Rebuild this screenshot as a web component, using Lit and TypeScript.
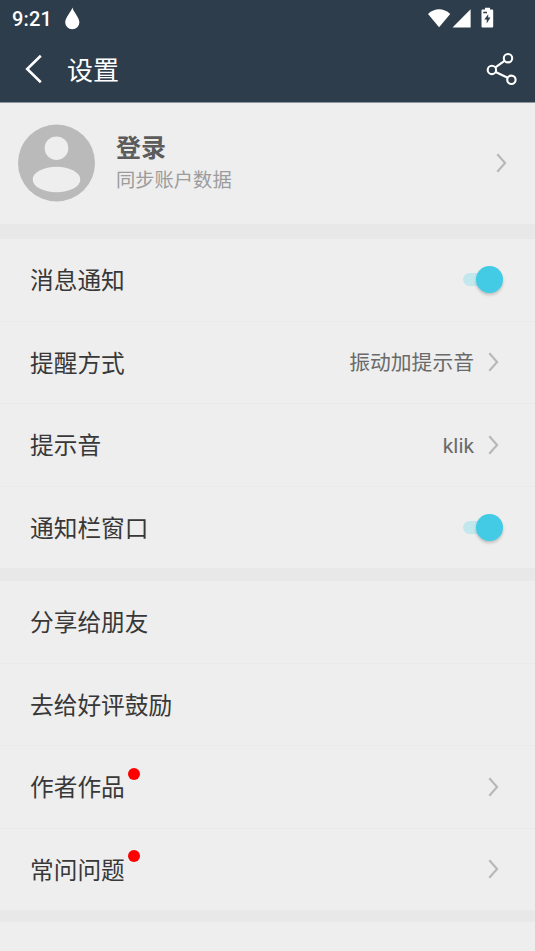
import { LitElement, html, css, svg } from "lit";
import { customElement, property } from "lit/decorators.js";

const fonts = css`"Roboto", "Noto Sans CJK SC", sans-serif`;

@customElement("chevron-icon")
class ChevronIcon extends LitElement {
  static styles = css`
    :host { display: block; width: 12px; height: 22px; flex: none; }
    svg { display: block; }
  `;
  render() {
    return html`<svg width="12" height="22" viewBox="0 0 12 22" fill="none" stroke="#b7b7b7" stroke-width="2.1">
      <path d="M2.3 2.3 L10.1 11 L2.3 19.7" />
    </svg>`;
  }
}

@customElement("toggle-switch")
class ToggleSwitch extends LitElement {
  static styles = css`
    :host { display: flex; align-items: center; justify-content: flex-end; width: 40px; height: 27px; }
    .track { width: 27px; height: 13px; border-radius: 7px; background: #c2e7ed; margin-right: -14px; }
    .thumb { width: 26.6px; height: 26.6px; border-radius: 50%; background: #43cbe6; box-shadow: 0 2px 3px rgba(0, 0, 0, 0.2); }
  `;
  render() {
    return html`<div class="track"></div><div class="thumb"></div>`;
  }
}

@customElement("setting-row")
class SettingRow extends LitElement {
  @property() label = "";
  @property() value = "";
  @property() kind = "";
  @property({ type: Boolean }) dot = false;
  static styles = css`
    :host { display: flex; align-items: center; flex: 1; padding: 0 32px 0 30px; font-family: ${fonts}; color: #383838; }
    .label { font-size: 23.7px; line-height: 34px; position: relative; white-space: nowrap; padding-top: 3px; }
    .dot { position: absolute; width: 12px; height: 12px; border-radius: 50%; background: #fe0000; left: 98px; top: -0.5px; }
    .value { margin-left: auto; font-size: 20.8px; line-height: 30px; color: #6a6a6a; padding-top: 2px; }
    chevron-icon { margin-left: 13px; margin-right: 4px; }
    toggle-switch { margin-left: auto; }
  `;
  render() {
    return html`
      <div class="label">${this.label}${this.dot ? html`<span class="dot"></span>` : ""}</div>
      ${this.kind === "switch" ? html`<toggle-switch></toggle-switch>` : ""}
      ${this.kind === "link" ? html`<div class="value">${this.value}</div><chevron-icon></chevron-icon>` : ""}
    `;
  }
}

@customElement("app-root")
class AppRoot extends LitElement {
  static styles = css`
    :host { display: flex; flex-direction: column; width: 535px; height: 951px; overflow: hidden; background: #eee; font-family: ${fonts}; }
    header { flex: none; background: #2e3d4b; color: #fff; border-bottom: 1px solid #8d959c; box-sizing: border-box; height: 103px; }
    .status { display: flex; height: 37px; align-items: center; padding: 0 41px 0 12px; box-sizing: border-box; }
    .time { font-size: 20px; font-weight: 500; line-height: 24px; width: 52px; letter-spacing: 0.2px; }
    .system { margin-left: auto; }
    .bar { display: flex; height: 64px; align-items: center; padding: 0 17px 0 24px; box-sizing: border-box; }
    h1 { margin: 0 auto 0 24px; padding-top: 3px; font-size: 26px; line-height: 38px; font-weight: 400; }
    svg { display: block; flex: none; }
    .profile { display: flex; height: 121px; flex: none; align-items: center; padding: 0 28px 1px 18px; box-sizing: border-box; }
    .account { margin: 0 auto 0 21px; }
    .name { font-size: 25px; line-height: 34px; font-weight: 700; color: #5c5c5c; }
    .hint { font-size: 19.3px; line-height: 28px; color: #9c9c9c; padding-top: 1px; }
    .gap { flex: none; background: #e8e8e8; }
    .first { height: 15px; }
    .second { height: 13px; }
    .last { height: 12px; }
    .group { display: flex; flex-direction: column; flex: none; height: 329px; }
    .group setting-row + setting-row { border-top: 1px solid #eaeaea; }
  `;
  render() {
    return html`
      <header>
        <div class="status">
          <span class="time">9:21</span>
          <svg width="16" height="24" viewBox="0 0 16 24"><path fill="#fff" d="M8.4 0.4 C9 4 15.4 10.7 15.4 15.2 A7.1 7.1 0 0 1 1.2 15.2 C1.2 10.7 7.6 4 8.4 0.4Z" /></svg>
          <svg class="system" width="66" height="24" viewBox="0 0 66 24" fill="#fff">
            <path d="M0 6.9 C6.7 0.7 15.5 0.7 22.2 6.9 L11.1 20.2Z" />
            <path d="M24.5 20.4 L42.6 2.2 V20.4Z" />
            <path fill-rule="evenodd" d="M57 0.7 h5 v1.8 h2.2 q1 0 1 1 v15.9 q0 1-1 1 H54.5 q-1 0-1-1 V3.5 q0-1 1-1 H57Z M60.2 7.2 L56.3 12.6 H58.7 V16.6 L62.5 10.6 H60.2Z M55.2 4.7 V6.2 H59 V4.7Z" />
          </svg>
        </div>
        <div class="bar">
          <svg width="19" height="30" viewBox="0 0 19 30" fill="none" stroke="#fff" stroke-width="2.6"><path d="M16.8 1.8 L3.2 15 L16.8 28.2" /></svg>
          <h1>设置</h1>
          <svg width="32" height="34" viewBox="0 0 32 34" fill="none" stroke="#fff" stroke-width="2.1">
            ${svg`<circle cx="22" cy="6.2" r="4.2"/><circle cx="5.9" cy="17.9" r="4.2"/><circle cx="25.4" cy="27.8" r="4.2"/>`}
            <path d="M18.5 8.8 L9.4 15.4 M9.6 20 L21.7 25.8" />
          </svg>
        </div>
      </header>
      <section class="profile">
        <svg width="77" height="78" viewBox="0 0 77 78" fill="#eee">
          <circle cx="38.5" cy="39" r="38.5" fill="#bababa" />
          <circle cx="38.5" cy="24.2" r="11.8" />
          <ellipse cx="38.5" cy="55.5" rx="23.8" ry="12.8" />
        </svg>
        <div class="account">
          <div class="name">登录</div>
          <div class="hint">同步账户数据</div>
        </div>
        <chevron-icon></chevron-icon>
      </section>
      <div class="gap first"></div>
      <section class="group">
        <setting-row label="消息通知" kind="switch"></setting-row>
        <setting-row label="提醒方式" value="振动加提示音" kind="link"></setting-row>
        <setting-row label="提示音" value="klik" kind="link"></setting-row>
        <setting-row label="通知栏窗口" kind="switch"></setting-row>
      </section>
      <div class="gap second"></div>
      <section class="group">
        <setting-row label="分享给朋友"></setting-row>
        <setting-row label="去给好评鼓励"></setting-row>
        <setting-row label="作者作品" kind="link" dot></setting-row>
        <setting-row label="常问问题" kind="link" dot></setting-row>
      </section>
      <div class="gap last"></div>
    `;
  }
}
